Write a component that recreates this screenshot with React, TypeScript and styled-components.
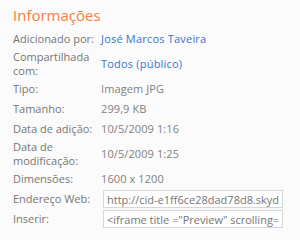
import React from "react";
import styled, { createGlobalStyle } from "styled-components";

const GlobalStyle = createGlobalStyle`
  body {
    margin: 0;
    background: #fbfbfb;
    font-family: "Open Sans", "Noto Sans", sans-serif;
  }
`;

interface InfoRow {
  label: string;
  value: string;
  kind?: "link" | "field";
}

const rows: InfoRow[] = [
  { label: "Adicionado por:", value: "José Marcos Taveira", kind: "link" },
  { label: "Compartilhada com:", value: "Todos (público)", kind: "link" },
  { label: "Tipo:", value: "Imagem JPG" },
  { label: "Tamanho:", value: "299,9 KB" },
  { label: "Data de adição:", value: "10/5/2009 1:16" },
  { label: "Data de modificação:", value: "10/5/2009 1:25" },
  { label: "Dimensões:", value: "1600 x 1200" },
  {
    label: "Endereço Web:",
    value: "http://cid-e1ff6ce28dad78d8.skydrive.live.com/self.aspx/Fotos/imagem.jpg",
    kind: "field",
  },
  {
    label: "Inserir:",
    value: '<iframe title ="Preview" scrolling="no" marginheight="0" marginwidth="0" frameborder="0"',
    kind: "field",
  },
];

const App: React.FC = () => {
  return (
    <>
      <GlobalStyle />
      <Panel>
        <Title>Informações</Title>
        <Table>
          {rows.map((row) => (
            <Row key={row.label}>
              <Label>{row.label}</Label>
              {row.kind === "link" ? (
                <Link href="#">{row.value}</Link>
              ) : row.kind === "field" ? (
                <Field readOnly value={row.value} />
              ) : (
                <Value>{row.value}</Value>
              )}
            </Row>
          ))}
        </Table>
      </Panel>
    </>
  );
};

export default App;

const Panel = styled.div`
  width: 300px;
  height: 240px;
  padding: 5px 0 0 13px;
  box-sizing: border-box;
`;

const Title = styled.h2`
  margin: 0 0 4px;
  font-size: 15px;
  line-height: 20px;
  font-weight: 400;
  color: #f3803f;
`;

const Table = styled.div`
  display: flex;
  flex-direction: column;
`;

const Row = styled.div`
  display: grid;
  grid-template-columns: 88px 180px;
  align-items: center;
  min-height: 20px;
  padding: 1px 0;
  box-sizing: border-box;
  font-size: 11px;
  line-height: 14px;
`;

const Label = styled.span`
  color: #767676;
  padding-right: 6px;
`;

const Value = styled.span`
  color: #818181;
  letter-spacing: 0.1px;
`;

const Link = styled.a`
  color: #3374d4;
  text-decoration: none;
  letter-spacing: 0.2px;
`;

const Field = styled.input`
  margin: 0 0 0 2px;
  height: 18px;
  width: 180px;
  box-sizing: border-box;
  border: 1px solid #d6d6d6;
  background: #fff;
  padding: 0 3px;
  font-family: inherit;
  font-size: 11px;
  color: #757575;
  outline: none;
`;
